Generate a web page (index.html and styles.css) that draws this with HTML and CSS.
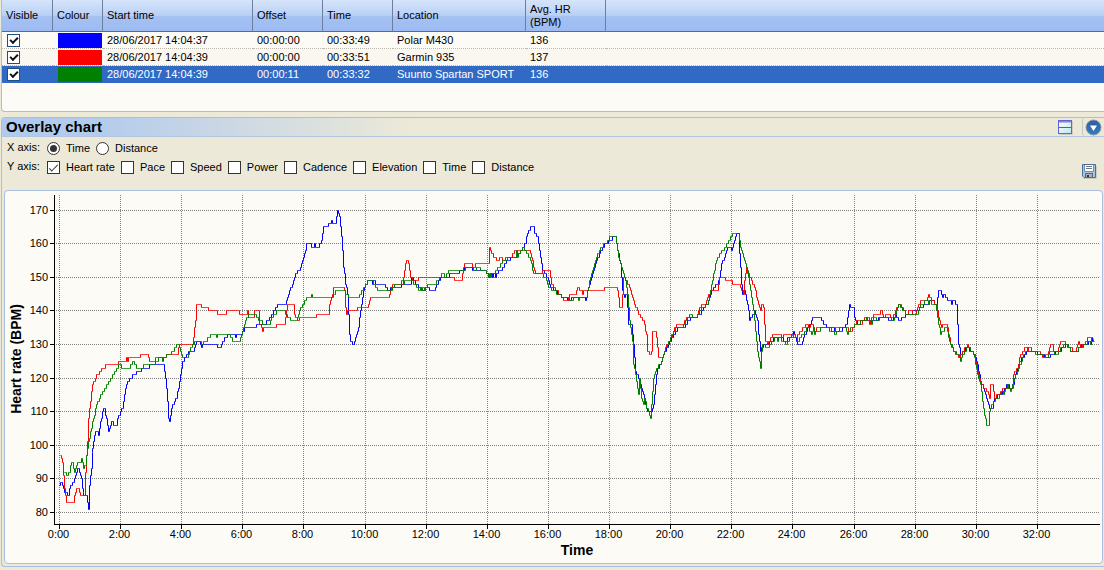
FILE: index.html
```html
<!DOCTYPE html>
<html lang="en">
<head>
  <meta charset="utf-8">
  <title>Overlay chart</title>
  <link rel="stylesheet" href="styles.css">
</head>
<body>
  <div class="track-panel">
    <table class="tracks">
      <colgroup>
        <col class="col-visible">
        <col class="col-colour">
        <col class="col-start">
        <col class="col-offset">
        <col class="col-time">
        <col class="col-location">
        <col class="col-hr">
        <col>
      </colgroup>
      <thead>
        <tr>
          <th>Visible</th>
          <th>Colour</th>
          <th>Start time</th>
          <th>Offset</th>
          <th>Time</th>
          <th>Location</th>
          <th>Avg. HR<br>(BPM)</th>
          <td></td>
        </tr>
      </thead>
      <tbody>
        <tr>
          <td><input type="checkbox" class="tick" aria-label="Show Polar M430" checked></td>
          <td class="swatch-cell"><div class="swatch blue"></div></td>
          <td>28/06/2017 14:04:37</td>
          <td>00:00:00</td>
          <td>00:33:49</td>
          <td>Polar M430</td>
          <td>136</td>
          <td></td>
        </tr>
        <tr class="alt">
          <td><input type="checkbox" class="tick" aria-label="Show Garmin 935" checked></td>
          <td class="swatch-cell"><div class="swatch red"></div></td>
          <td>28/06/2017 14:04:39</td>
          <td>00:00:00</td>
          <td>00:33:51</td>
          <td>Garmin 935</td>
          <td>137</td>
          <td></td>
        </tr>
        <tr class="selected">
          <td><input type="checkbox" class="tick" aria-label="Show Suunto Spartan SPORT" checked></td>
          <td class="swatch-cell"><div class="swatch green"></div></td>
          <td>28/06/2017 14:04:39</td>
          <td>00:00:11</td>
          <td>00:33:32</td>
          <td>Suunto Spartan SPORT</td>
          <td>136</td>
          <td></td>
        </tr>
      </tbody>
    </table>
  </div>

  <div class="chart-panel">
    <div class="panel-header">
      <h1>Overlay chart</h1>
      <button type="button" class="icon-button split" aria-label="Split view">
        <svg width="16" height="16" viewBox="0 0 16 16">
          <defs>
            <linearGradient id="pane" x1="0" y1="0" x2="1" y2="1">
              <stop offset="0" stop-color="#ffffff"/>
              <stop offset="1" stop-color="#b8e8f0"/>
            </linearGradient>
          </defs>
          <path d="M1 15.5H14.500V2" fill="none" stroke="#cfccbf"/>
          <rect x="0.500" y="1.500" width="13" height="13" fill="url(#pane)" stroke="#6464d4"/>
          <path d="M1 2.500H13" stroke="#8c8c94"/>
          <path d="M1 3.500H13" stroke="#b4b8e8"/>
          <path d="M1 8.500H13" stroke="#5858c8"/>
        </svg>
      </button>
      <button type="button" class="icon-button menu" aria-label="Chart menu">
        <svg width="17" height="17" viewBox="0 0 17 17">
          <defs>
            <linearGradient id="ball" x1="0" y1="0" x2="0" y2="1">
              <stop offset="0" stop-color="#2a5596"/>
              <stop offset="1" stop-color="#2f86c8"/>
            </linearGradient>
          </defs>
          <circle cx="8.500" cy="8.500" r="7.500" fill="url(#ball)" stroke="#8c9aa8"/>
          <circle cx="8.500" cy="8.500" r="5.500" fill="none" stroke="#3c6fb4"/>
          <path d="M5 6.500H12L8.500 12Z" fill="#ffffff"/>
        </svg>
      </button>
    </div>

    <div class="options">
      <div class="axes">
        <div class="axis" role="radiogroup" aria-label="X axis">
          <span class="axis-name">X axis:</span>
          <label><input type="radio" name="xaxis" checked>Time</label>
          <label><input type="radio" name="xaxis">Distance</label>
        </div>
        <div class="axis" role="group" aria-label="Y axis">
          <span class="axis-name">Y axis:</span>
          <label><input type="checkbox" checked>Heart rate</label>
          <label><input type="checkbox">Pace</label>
          <label><input type="checkbox">Speed</label>
          <label><input type="checkbox">Power</label>
          <label><input type="checkbox">Cadence</label>
          <label><input type="checkbox">Elevation</label>
          <label><input type="checkbox">Time</label>
          <label><input type="checkbox">Distance</label>
        </div>
      </div>
      <button type="button" class="icon-button save" aria-label="Save chart">
        <svg width="15" height="15" viewBox="0 0 15 15">
          <path d="M1 14.500H14.500V2" fill="none" stroke="#cfccbf"/>
          <path d="M0.500 0.500H13.500V13.500H2L0.500 12Z" fill="#a9c6ea" stroke="#4c6c98"/>
          <rect x="3" y="1" width="8" height="6" fill="#ffffff"/>
          <path d="M2.500 1V7.500H11.500V1" fill="none" stroke="#6c8cb8"/>
          <path d="M4 2.500H10M4 4.500H10" stroke="#6c747c"/>
          <rect x="3.500" y="9.500" width="7" height="4" fill="#b0b0b0" stroke="#60686f"/>
          <rect x="5" y="11" width="2" height="2" fill="#30363c"/>
        </svg>
      </button>
    </div>

    <div class="chart-box">
      <svg id="chart" class="chart" viewBox="5 191 1097 372" role="img" aria-label="Heart rate against time"></svg>
    </div>
  </div>

  <script src="chart.js"></script>
</body>
</html>
```

FILE: styles.css
```css
body {
  margin: 0;
  background-color: #ece9d8;
  color: #000;
  font-family: "Liberation Sans", Arial, sans-serif;
  font-size: 11px;
  line-height: 13px;
}

/* track list */
.track-panel {
  box-sizing: border-box;
  min-height: 112px;
  margin-left: 1px;
  background-color: #fcfbf6;
  border-left: 1px solid #a9bfdf;
  border-bottom: 1px solid #a9bfdf;
  border-bottom-left-radius: 4px;
}
.tracks {
  width: 100%;
  table-layout: fixed;
  border-collapse: separate;
  border-spacing: 0;
}
.col-visible { width: 51px; }
.col-colour { width: 50px; }
.col-start { width: 150px; }
.col-offset { width: 70px; }
.col-time { width: 70px; }
.col-location { width: 133px; }
.col-hr { width: 80px; }

.tracks thead tr {
  background: linear-gradient(#d6e4fa 0%, #b9d0f6 48%, #a4c1f3 52%, #9dbbf2 100%);
}
.tracks thead th,
.tracks thead td {
  box-sizing: border-box;
  height: 32px;
  padding: 0 4px;
  border-bottom: 1px solid #4f6ba0;
  text-align: left;
  font-weight: normal;
}
.tracks thead th {
  border-right: 1px solid #6d7f9f;
}
.tracks tbody td {
  box-sizing: border-box;
  height: 17px;
  padding: 1px 4px 0;
  border-bottom: 1px dotted #bbb8b0;
  white-space: nowrap;
}
.tracks .alt {
  background-color: #faf7f0;
}
.tracks .selected {
  background-color: #316ac5;
  color: #fff;
}
.tracks .selected td {
  border-bottom-color: #316ac5;
}
.tracks tbody .swatch-cell {
  padding: 1px 1px 0 5px;
}
.swatch {
  height: 15px;
}
.blue { background-color: #0000ff; }
.red { background-color: #ff0000; }
.green { background-color: #008000; }

/* tick boxes and radios */
input {
  appearance: none;
  box-sizing: border-box;
  display: grid;
  place-items: center;
  width: 13px;
  height: 13px;
  margin: 0;
  border: 1px solid #333;
  background-color: #fff;
}
input[type="radio"] {
  border-radius: 50%;
}
input[type="radio"]:checked::before {
  content: "";
  width: 7px;
  height: 7px;
  border-radius: 50%;
  background-color: #333;
}
input[type="checkbox"]:checked::before {
  content: "";
  width: 9px;
  height: 4px;
  box-sizing: border-box;
  border-left: 1px solid #333;
  border-bottom: 1px solid #333;
  transform: translateY(-1px) rotate(-45deg);
}
.tick {
  margin-left: 1px;
  border-color: #1c5180;
}
input.tick[type="checkbox"]:checked::before {
  width: 8px;
  height: 5px;
  border-width: 0 0 2px 2px;
  border-style: solid;
  border-color: #111;
}

/* chart panel */
.chart-panel {
  margin: 5px 0 3px 1px;
  border: 1px solid #a9bfdf;
  border-right: none;
  border-radius: 4px 0 0 4px;
}
.panel-header {
  display: flex;
  align-items: center;
  height: 18px;
  padding-left: 4px;
  border-bottom: 1px solid #b3c5dd;
  border-top-left-radius: 3px;
  background: linear-gradient(to right, #afcaf0 0, #b4ccec 100px, #ece9d8 410px);
}
.panel-header h1 {
  flex: 1;
  margin: 0;
  font-size: 15px;
  line-height: 18px;
}
.icon-button {
  display: flex;
  align-items: center;
  justify-content: center;
  padding: 0;
  border: none;
  background: none;
}
.split {
  margin-right: 8px;
}
.menu {
  width: 22px;
  height: 18px;
  border-left: 1px solid #c4c8c4;
  border-radius: 3px;
}
.options {
  display: flex;
  justify-content: space-between;
  align-items: flex-end;
  padding: 2px 7px 11px 5px;
}
.axes {
  padding-bottom: 2px;
}
.axis {
  display: flex;
  align-items: center;
  gap: 6px;
  height: 19px;
}
.axis-name {
  width: 34px;
  padding-bottom: 2px;
}
.axis label {
  display: flex;
  align-items: center;
  gap: 6px;
}
.chart-box {
  margin: 0 1px 2px 2px;
  border: 1px solid #a9bfdf;
  border-radius: 4px;
  background-color: #fcfbf6;
}

/* chart drawing */
.chart {
  display: block;
  width: 100%;
  font-size: 11px;
}
.grid {
  stroke: #808080;
  stroke-dasharray: 1 1;
  shape-rendering: crispEdges;
}
.axis-line {
  stroke: #000;
  shape-rendering: crispEdges;
}
.series {
  fill: none;
  stroke-width: 1;
}
.axis-title {
  font-size: 14px;
  font-weight: bold;
}
.x-label,
.axis-title {
  text-anchor: middle;
}
.y-label {
  text-anchor: end;
}
```

FILE: chart.js
```js
var chart = document.getElementById("chart");
var LEFT = 54, RIGHT = 1099, TOP = 195, BOTTOM = 524;

function yPos(bpm) {
  return Math.round(512 - (bpm - 80) * 3.36) + 0.5;
}

function add(name, attrs, text) {
  var el = document.createElementNS("http://www.w3.org/2000/svg", name);
  for (var key in attrs) el.setAttribute(key, attrs[key]);
  if (text) el.textContent = text;
  chart.appendChild(el);
}

function line(cls, x1, y1, x2, y2) {
  add("line", { class: cls, x1: x1, y1: y1, x2: x2, y2: y2 });
}

// grid, ticks and tick labels
for (var bpm = 80; bpm <= 170; bpm += 10) {
  line("grid", LEFT, yPos(bpm), RIGHT, yPos(bpm));
  line("axis-line", LEFT - 4, yPos(bpm), LEFT, yPos(bpm));
  add("text", { class: "y-label", x: 48, y: yPos(bpm) + 3 }, String(bpm));
}
for (var min = 0; min <= 32; min += 2) {
  var x = Math.round(59 + min * 30.56) + 0.5;
  line("grid", x, TOP, x, BOTTOM);
  line("axis-line", x, BOTTOM, x, BOTTOM + 5);
  add("text", { class: "x-label", x: x - 1, y: 538 }, min + ":00");
}
line("axis-line", LEFT + 0.5, TOP, LEFT + 0.5, BOTTOM + 1);
line("axis-line", LEFT, BOTTOM + 0.5, RIGHT + 1, BOTTOM + 0.5);
add("text", { class: "axis-title", x: 577, y: 555 }, "Time");
add("text", { class: "axis-title", transform: "translate(21 359) rotate(-90)" }, "Heart rate (BPM)");

// pairs of x position and heart rate
var series = [
  {
    color: "#0000ff",
    points: "59,88 61,89 62.5,88 65,86 67,85 68.5,85 69.5,87 73,89 76,92 77,93 79,92 81,90 82,87 83.5,85 86,85 87,83 88.3,81 89.3,88 91,93 92.3,99 94,103 95,104 97,104 98,103 99,105 101,108 103,111 104,111 105,109 107,106 108,104 110,106 111,107 113,106 116,106 117,108 120,110 122,111 124,115 126,118 130,120 137,122 144,123 153,124 163,124 165,120 167,113 168,108 169,107 171,111 174,113 176,114 178,117 180,121 182,125 189,128 193,128 196,131 199,131 201,129 203,130 215,130 217,129 220,129 224,132 229,133 234,133 235,132 236,133 241,133 245,135 255,135 256,136 263,136 268,137 272,139 278,142 285,142 288,145 293,149 297,152 299,152 303,156 305,158 306,160 309,160 311,159 313,159 314,160 315,159 318,159 321,161 323,165 327,165 328,166 330,166 331,167 332,166 335,166 337,170 338,169 339,168 341,162 343,153 345,148 347,145 349,133 350,131 353,130 355,132 358,135 360,140 362,144 364,147 367,149 371,149 372,148 374,149 375,148 383,148 387,146 393,147 400,147 402,148 410,148 411,150 413,149 419,147 422,146 427,147 429,146 434,146 436,148 441,150 448,150 450,151 458,151 459,152 468,153 475,152 485,152 488,150 491,151 492,150 494,151 495,150 496,151 500,152 507,155 513,156 518,157 523,159 525,160 527,163 529,164 531,165 533,165 534,163 537,162 539,158 542,152 545,151 548,149 550,147 558,145 562,144 570,143 572,144 583,144 585,143 588,147 592,151 595,154 600,158 605,160 610,161 613,162 615,162 617,158 620,154 622,146 624,144 626,145 628,136 631,136 633,130 635,122 639,119 643,115 645,112 647,110 651,110 653,112 655,118 657,123 660,124 663,127 668,130 672,132 677,135 684,135 687,137 693,138 700,139 703,141 707,142 709,144 713,147 717,148 719,150 721,154 723,155 727,159 730,159 731,158 733,160 736,163 738,163 739,157 741,148 742,145 744,146 747,142 749,137 751,138 754,140 757,137 758,133 760,128 763,130 767,130 775,132 782,132 783,131 790,132 793,134 795,132 797,130 801,130 803,132 806,134 811,137 813,138 819,138 823,136 827,135 840,134 846,136 849,142 850,141 853,141 854,138 857,136 863,137 873,137 883,138 892,137 895,139 898,137 903,138 907,139 917,140 925,142 932,143 936,141 938,146 939,146 941,145 942,144 943,145 947,143 950,143 951,142 952,143 956,142 958,130 960,127 963,128 966,129 970,128 974,127 977,124 980,119 983,117 986,114 989,111 992,111 994,114 1000,115 1007,118 1010,117 1013,118 1015,121 1018,124 1022,126 1027,128 1033,128 1040,127 1047,126 1052,127 1058,128 1067,130 1070,128 1076,128 1082,130 1087,130 1089,131 1090,130 1092,132 1093,131"
  },
  {
    color: "#ff0000",
    points: "60,97 62,95 63,91 64,87 66,83 73,83 75,86 76,87 78,87 80,85 84,85 85,92 87,101 88,108 90,113 92,118 95,120 97,121 102,123 107,124 117,124 118,125 125,125 126,126 127,125 128,126 139,126 141,127 147,127 149,125 154,125 155,126 165,126 167,127 177,127 179,130 192,130 193,132 195,137 196,142 199,142 201,141 207,141 208,140 215,140 217,139 225,139 226,140 238,140 239,139 246,139 247,140 248,138 253,138 254,140 258,140 259,136 261,135 262,134 263,135 275,135 276,136 284,136 286,140 287,142 293,142 294,139 297,137 300,138 315,138 317,139 328,139 329,142 332,145 333,147 343,147 344,146 345,141 346,139 348,140 356,140 357,141 367,141 369,143 371,144 388,144 390,146 392,148 402,148 404,152 406,155 407,155 409,152 410,150 413,149 417,149 418,150 452,150 454,149 461,149 463,153 464,154 470,154 472,153 474,153 475,154 488,154 489,159 491,157 493,156 498,155 500,156 503,155 506,156 511,156 513,157 515,158 529,158 531,156 533,153 535,151 540,151 543,152 549,152 551,148 555,146 560,145 563,143 567,143 569,145 575,145 577,147 580,146 582,145 584,146 603,146 605,147 616,147 617,146 619,141 621,141 622,145 623,150 625,149 628,148 631,145 634,142 638,139 643,137 646,133 647,128 650,127 651,128 652,134 655,134 657,129 658,126 662,126 665,129 672,133 676,136 683,136 686,138 696,138 698,140 702,142 705,142 708,145 711,146 717,146 719,150 723,150 725,149 731,149 732,148 739,148 741,146 743,145 744,149 746,153 747,151 751,149 754,147 757,143 760,140 761,142 763,141 764,136 765,131 767,130 772,133 779,133 781,132 785,133 789,133 792,132 793,133 796,132 800,134 806,136 808,135 812,136 814,134 818,135 828,135 833,134 837,135 845,135 850,134 853,135 857,137 861,136 865,138 869,136 873,139 878,139 881,140 883,138 887,139 892,138 895,140 898,142 902,141 905,139 911,140 912,139 915,139 918,142 922,143 926,143 928,145 931,143 936,142 938,138 941,135 943,136 946,136 948,133 950,130 953,128 959,126 962,128 966,129 967,130 968,129 971,128 974,127 977,122 981,118 983,117 987,116 989,114 990,118 992,118 994,114 998,115 1003,117 1012,117 1013,121 1017,123 1020,127 1025,129 1029,128 1038,128 1042,126 1047,127 1050,130 1052,130 1053,128 1057,128 1060,131 1064,131 1067,129 1075,128 1078,131 1080,129 1084,130 1087,132 1090,132 1091,131 1094,131"
  },
  {
    color: "#008000",
    points: "64,92 67,91 69,92 70,94 72,95 73,93 74,92 76,94 77,95 80,95 81,96 82,95 83,93 85,94 87,99 89,102 91,105 93,108 96,112 99,114 103,116 107,118 111,120 113,121 116,123 119,124 121,123 129,123 131,124 133,125 136,123 142,123 143,124 154,124 156,125 160,126 162,125 163,126 168,127 173,128 177,130 179,129 182,126 187,126 190,129 195,131 199,131 201,130 205,131 208,132 211,133 215,133 216,132 217,133 228,133 232,131 239,131 241,133 245,137 248,139 254,139 258,137 264,136 269,136 273,139 279,140 284,140 287,138 291,137 296,137 299,140 304,143 307,144 310,144 311,145 312,144 332,144 336,146 343,146 346,145 348,144 357,144 362,146 365,148 368,149 372,149 375,147 378,146 391,146 395,148 399,148 402,149 403,148 405,149 410,149 414,148 419,146 420,147 421,146 422,147 424,146 428,148 434,148 440,150 442,151 444,150 449,152 462,152 467,153 472,153 473,152 479,153 480,152 485,152 488,150 489,151 490,150 491,151 494,151 498,153 503,155 510,156 515,156 516,158 517,156 520,158 523,159 526,157 530,155 533,151 541,151 543,150 545,150 548,147 553,146 558,145 563,144 567,144 569,143 577,144 578,143 579,144 586,144 587,146 591,151 595,155 600,159 605,160 610,162 615,162 618,156 622,152 625,149 627,145 629,137 632,131 633,124 635,121 638,115 639,120 641,114 643,112 644,114 646,111 648,110 650,108 651,112 653,120 656,123 660,124 664,128 670,132 675,135 682,135 685,137 690,139 693,138 696,138 702,141 707,142 710,146 713,151 716,155 719,157 723,158 728,161 733,163 738,163 740,159 743,156 747,152 750,146 753,140 755,134 757,128 760,123 761,128 762,130 767,129 772,131 776,132 777,131 778,132 782,131 786,130 789,132 795,132 797,131 802,133 807,135 811,133 813,135 814,133 815,134 825,135 832,134 835,133 837,134 840,135 845,135 847,133 850,135 857,136 863,137 868,138 871,136 873,138 878,137 880,138 888,138 893,137 897,141 899,142 902,140 906,139 917,139 920,142 927,143 928,142 930,143 931,142 935,142 937,138 940,133 942,134 946,135 949,131 953,128 958,127 960,125 962,127 967,129 972,128 974,126 977,121 980,118 982,113 984,109 986,106 988,106 989,110 993,113 997,114 1002,116 1003,115 1007,118 1010,116 1013,119 1017,122 1022,126 1028,129 1032,128 1037,127 1047,126 1049,128 1057,127 1060,129 1066,130 1070,128 1076,128 1080,129 1085,130 1089,131 1090,130 1092,130"
  }
];

// heart rate is logged in whole beats, so each run between two pairs is drawn in steps
function trace(text) {
  var pts = text.split(" ").map(function (p) { return p.split(",").map(Number); });
  var out = [];
  var last = null;
  for (var i = 0; i < pts.length - 1; i++) {
    var a = pts[i], b = pts[i + 1];
    for (var x = a[0]; x < b[0]; x++) {
      var y = yPos(Math.round(a[1] + (b[1] - a[1]) * (x - a[0]) / (b[0] - a[0])));
      var px = Math.floor(x) + 0.5;
      if (last !== null && y !== last) out.push(px + "," + last);
      out.push(px + "," + y);
      last = y;
    }
  }
  var end = pts[pts.length - 1];
  out.push((end[0] + 0.5) + "," + yPos(end[1]));
  return out.join(" ");
}

series.forEach(function (s) {
  add("polyline", { class: "series", stroke: s.color, points: trace(s.points) });
});
```
